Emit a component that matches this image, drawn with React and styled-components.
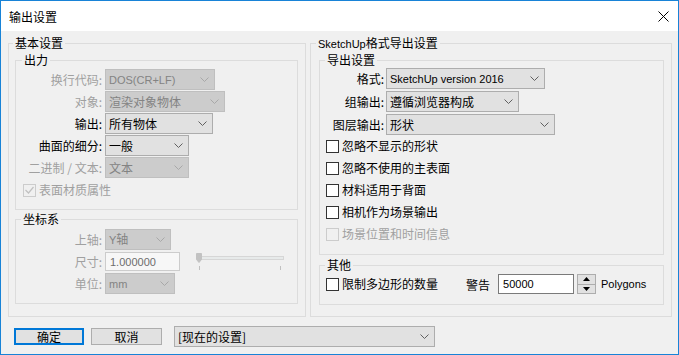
import React from "react";
import styled, { createGlobalStyle } from "styled-components";

const GlobalStyle = createGlobalStyle`
  body {
    margin: 0;
    background: #ffffff;
    font-family: "Noto Sans CJK SC", "Noto Sans", sans-serif;
    font-size: 12px;
  }
`;

const Window = styled.div`
  width: 679px;
  height: 355px;
  box-sizing: border-box;
  border: 1px solid #1883d7;
  background: #f0f0f0;
  display: flex;
  flex-direction: column;
`;

const TitleBar = styled.div`
  height: 30px;
  background: #ffffff;
  display: flex;
  align-items: center;
  justify-content: space-between;
  padding: 0 9px 0 8px;
  color: #000;
  font-size: 12px;
`;

const Body = styled.div`
  padding: 4px 0 0 7px;
`;

const Columns = styled.div`
  display: flex;
  gap: 4px;
  align-items: stretch;
`;

const Group = styled.fieldset`
  margin: 0;
  padding: 0;
  min-width: 0;
  border: 1px solid #dcdcdc;
  box-sizing: border-box;
`;

const OuterGroup = styled(Group)`
  width: ${(p) => p.$w}px;
  padding-bottom: 11px;
`;

const InnerGroup = styled(Group)`
  margin: ${(p) => p.$mt || 0}px ${(p) => p.$mr}px 0 ${(p) => p.$ml}px;
  padding: ${(p) => p.$pt || 0}px 0 ${(p) => p.$pb || 0}px 0;
`;

const Legend = styled.legend`
  margin-left: ${(p) => p.$ml ?? 5}px;
  padding: 0 2px;
  line-height: 16px;
  color: #000;
`;

// latin runs are set in a narrower face, like the dialog's UI font
const Latin = styled.span`
  font-family: "Liberation Sans", Arial, sans-serif;
  font-size: 11px;
`;

const FormGrid = styled.div`
  display: grid;
  grid-template-columns: ${(p) => p.$label}px auto;
  grid-auto-rows: 21px;
  row-gap: ${(p) => p.$gap}px;
  align-items: center;
  justify-items: start;
`;

const Label = styled.span`
  justify-self: end;
  padding-right: ${(p) => p.$pr ?? 3}px;
  line-height: 16px;
  white-space: nowrap;
  color: ${(p) => (p.$disabled ? "#a0a0a0" : "#000")};
`;

const SelectBox = styled.div`
  width: ${(p) => p.$w}px;
  height: 21px;
  box-sizing: border-box;
  border: 1px solid ${(p) => (p.$disabled ? "#bfbfbf" : "#adadad")};
  background: ${(p) => (p.$disabled ? "#cccccc" : "#e1e1e1")};
  color: ${(p) => (p.$disabled ? "#838383" : "#000")};
  display: flex;
  align-items: center;
  justify-content: space-between;
  padding: 0 5px 0 3px;
  line-height: 16px;
  white-space: nowrap;
`;

const TextInput = styled.div`
  width: ${(p) => p.$w}px;
  height: ${(p) => p.$h || 19}px;
  box-sizing: border-box;
  border: 1px solid ${(p) => (p.$disabled ? "#cccccc" : "#7a7a7a")};
  background: ${(p) => (p.$disabled ? "#f7f7f7" : "#ffffff")};
  color: ${(p) => (p.$disabled ? "#6d6d6d" : "#000")};
  display: flex;
  align-items: center;
  padding-left: 4px;
  line-height: 16px;
`;

const Inline = styled.div`
  display: flex;
  align-items: center;
  gap: ${(p) => p.$gap || 0}px;
  margin-left: ${(p) => p.$ml || 0}px;
`;

const CheckList = styled.div`
  display: flex;
  flex-direction: column;
  gap: 6px;
  margin: ${(p) => p.$mt}px 0 0 ${(p) => p.$ml}px;
`;

const CheckRow = styled.label`
  display: flex;
  align-items: center;
  gap: 3px;
  height: 16px;
  line-height: 16px;
  white-space: nowrap;
  color: ${(p) => (p.$disabled ? "#a0a0a0" : "#000")};
`;

const Box = styled.span`
  width: 13px;
  height: 13px;
  box-sizing: border-box;
  border: 1px solid ${(p) => (p.$disabled ? "#cccccc" : "#333333")};
  background: ${(p) => (p.$disabled ? "#f0f0f0" : "#ffffff")};
  display: flex;
  align-items: center;
  justify-content: center;
`;

const Footer = styled.div`
  display: flex;
  align-items: center;
  height: 21px;
  margin: 9px 0 0 6px;
`;

const Button = styled.div`
  width: ${(p) => (p.$focus ? 70 : 71)}px;
  height: 17px;
  box-sizing: border-box;
  border: ${(p) => (p.$focus ? "2px solid #0078d7" : "1px solid #adadad")};
  background: #e1e1e1;
  display: flex;
  align-items: center;
  justify-content: center;
  margin-right: ${(p) => p.$mr}px;
  line-height: 16px;
`;

const Spinner = styled.div`
  width: 19px;
  height: 20px;
  box-sizing: border-box;
  border: 1px solid #adadad;
  background: #e1e1e1;
  display: flex;
  flex-direction: column;
`;

const SpinHalf = styled.div`
  flex: 1;
  display: flex;
  align-items: center;
  justify-content: center;
  & + & {
    border-top: 1px solid #adadad;
  }
`;

const Chevron = ({ disabled }) => (
  <svg width="9" height="5" viewBox="0 0 9 5">
    <path
      d="M0.5 0.5 L4.5 4.5 L8.5 0.5"
      fill="none"
      stroke={disabled ? "#a8a8a8" : "#606060"}
      strokeWidth="1"
    />
  </svg>
);

const Select = ({ w, disabled, children }) => (
  <SelectBox $w={w} $disabled={disabled}>
    <span>{children}</span>
    <Chevron disabled={disabled} />
  </SelectBox>
);

const Check = ({ children, disabled, checked }) => (
  <CheckRow $disabled={disabled}>
    <Box $disabled={disabled}>
      {checked && (
        <svg width="9" height="8" viewBox="0 0 9 8">
          <path d="M0.5 4 L3.5 7 L8.5 1" fill="none" stroke={disabled ? "#c0c0c0" : "#333"} strokeWidth="1.2" />
        </svg>
      )}
    </Box>
    {children}
  </CheckRow>
);

const Slider = () => (
  <svg width="90" height="20" viewBox="0 0 90 20">
    <rect x="4.5" y="4.5" width="83" height="3" fill="#e7eaea" stroke="#d6d6d6" />
    <path d="M0.5 1.5 h5 v6 l-2.5 3 l-2.5 -3 z" fill="#c2c2c2" stroke="#c2c2c2" />
    <line x1="3.5" y1="14" x2="3.5" y2="18" stroke="#c0c0c0" />
    <line x1="84.5" y1="14" x2="84.5" y2="18" stroke="#c0c0c0" />
  </svg>
);

export default function App() {
  return (
    <>
      <GlobalStyle />
      <Window>
        <TitleBar>
          <span>输出设置</span>
          <svg width="11" height="11" viewBox="0 0 11 11">
            <path d="M0.5 0.5 L10.5 10.5 M10.5 0.5 L0.5 10.5" stroke="#000" strokeWidth="1" />
          </svg>
        </TitleBar>
        <Body>
          <Columns>
            <OuterGroup $w={298}>
              <Legend $ml={4}>基本设置</Legend>
              <InnerGroup $mt={1} $ml={6} $mr={7} $pt={1} $pb={11}>
                <Legend $ml={6}>出力</Legend>
                <FormGrid $label={89} $gap={1}>
                  <Label $disabled>换行代码:</Label>
                  <Select w={110} disabled><Latin>DOS(CR+LF)</Latin></Select>
                  <Label $disabled>对象:</Label>
                  <Select w={120} disabled>渲染对象物体</Select>
                  <Label>输出:</Label>
                  <Select w={108}>所有物体</Select>
                  <Label>曲面的细分:</Label>
                  <Select w={84}>一般</Select>
                  <Label $disabled>二进制 / 文本:</Label>
                  <Select w={84} disabled>文本</Select>
                </FormGrid>
                <CheckList $mt={4} $ml={7}>
                  <Check disabled checked>表面材质属性</Check>
                </CheckList>
              </InnerGroup>
              <InnerGroup $mt={1} $ml={6} $mr={7} $pt={2} $pb={9}>
                <Legend $ml={5}>坐标系</Legend>
                <FormGrid $label={89} $gap={1}>
                  <Label $disabled>上轴:</Label>
                  <Select w={66} disabled><Latin>Y</Latin>轴</Select>
                  <Label $disabled>尺寸:</Label>
                  <Inline $gap={16}>
                    <TextInput $w={75} $disabled><Latin>1.000000</Latin></TextInput>
                    <Slider />
                  </Inline>
                  <Label $disabled>单位:</Label>
                  <Select w={70} disabled><Latin>mm</Latin></Select>
                </FormGrid>
              </InnerGroup>
            </OuterGroup>

            <OuterGroup $w={362}>
              <Legend><Latin>SketchUp</Latin>格式导出设置</Legend>
              <InnerGroup $ml={8} $mr={7} $pb={12}>
                <Legend>导出设置</Legend>
                <FormGrid $label={66} $gap={2}>
                  <Label $pr={2}>格式:</Label>
                  <Select w={159}><Latin>SketchUp version 2016</Latin></Select>
                  <Label $pr={2}>组输出:</Label>
                  <Select w={133}>遵循浏览器构成</Select>
                  <Label $pr={2}>图层输出:</Label>
                  <Select w={169}>形状</Select>
                </FormGrid>
                <CheckList $mt={3} $ml={6}>
                  <Check>忽略不显示的形状</Check>
                  <Check>忽略不使用的主表面</Check>
                  <Check>材料适用于背面</Check>
                  <Check>相机作为场景输出</Check>
                  <Check disabled>场景位置和时间信息</Check>
                </CheckList>
              </InnerGroup>
              <InnerGroup $mt={2} $ml={8} $mr={7} $pt={1} $pb={10}>
                <Legend>其他</Legend>
                <Inline $ml={6}>
                  <Check>限制多边形的数量</Check>
                  <Inline $gap={8} $ml={28}>
                    <span>警告</span>
                    <Inline $gap={3}>
                      <TextInput $w={76} $h={20}><Latin>50000</Latin></TextInput>
                      <Spinner>
                        <SpinHalf>
                          <svg width="7" height="4" viewBox="0 0 7 4"><path d="M3.5 0 L7 4 L0 4 z" fill="#000" /></svg>
                        </SpinHalf>
                        <SpinHalf>
                          <svg width="7" height="4" viewBox="0 0 7 4"><path d="M0 0 L7 0 L3.5 4 z" fill="#000" /></svg>
                        </SpinHalf>
                      </Spinner>
                      <Inline $ml={2}><Latin>Polygons</Latin></Inline>
                    </Inline>
                  </Inline>
                </Inline>
              </InnerGroup>
            </OuterGroup>
          </Columns>
          <Footer>
            <Button $focus $mr={7}>确定</Button>
            <Button $mr={12}>取消</Button>
            <Select w={261}>[现在的设置]</Select>
          </Footer>
        </Body>
      </Window>
    </>
  );
}
